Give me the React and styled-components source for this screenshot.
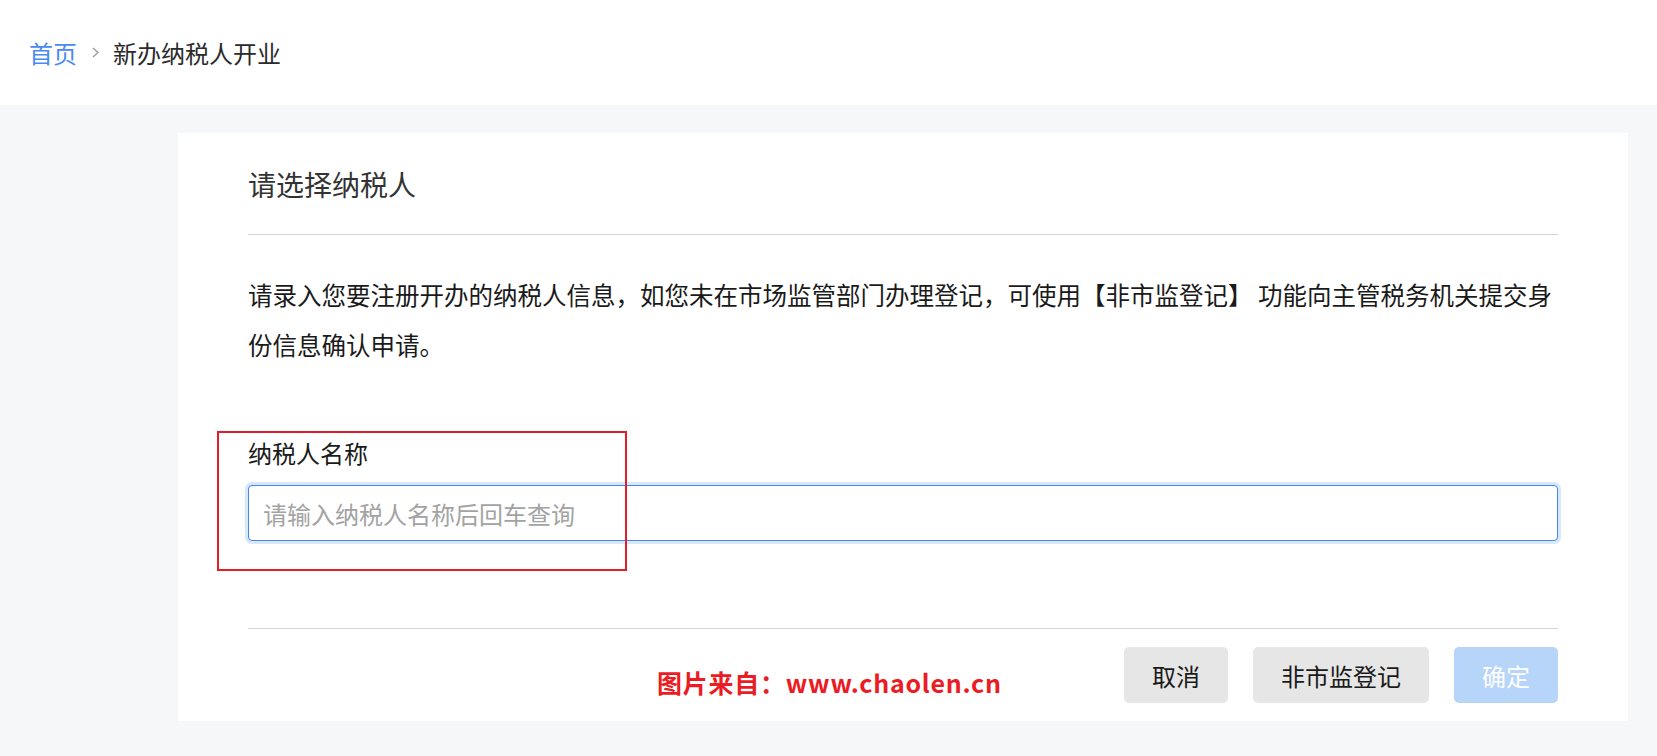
import React from 'react';
import styled, {createGlobalStyle} from 'styled-components';

const GlobalStyle = createGlobalStyle`
  html, body {
    margin: 0;
    padding: 0;
    background: #f6f7f9;
    font-family: "Noto Sans CJK SC", "Noto Sans", sans-serif;
  }
  * { box-sizing: border-box; }
`;

const Page = styled.div`
  position: relative;
  min-height: 756px;
`;

const Header = styled.div`
  height: 105px;
  background: #fff;
  display: flex;
  align-items: center;
  padding-left: 29px;
  font-size: 24px;
`;

const Crumb = styled.span`
  color: ${props => (props.link ? '#4a8af4' : '#2b2b2b')};
  cursor: ${props => (props.link ? 'pointer' : 'default')};
`;

const Sep = styled.span`
  display: inline-flex;
  margin: 0 14px 0 15px;
`;

const Main = styled.div`
  padding: 28px 29px 0 178px;
`;

const Card = styled.div`
  background: #fff;
  padding: 31px 70px 18px;
`;

const Title = styled.div`
  font-size: 28px;
  line-height: 40px;
  color: #333;
  padding-bottom: 30px;
  border-bottom: 1px solid #d6d6d6;
`;

const Notice = styled.p`
  margin: 35px 0 0;
  font-size: 24.5px;
  line-height: 50px;
  color: #1a1a1a;
`;

const Label = styled.div`
  margin-top: 66px;
  font-size: 24px;
  line-height: 34px;
  color: #1a1a1a;
`;

const Input = styled.input`
  display: block;
  width: 100%;
  height: 56px;
  margin-top: 15px;
  padding: 0 14px;
  border: 1px solid #4383f2;
  border-radius: 4px;
  box-shadow: 0 0 0 3px #d7e7fc;
  outline: none;
  font-family: inherit;
  font-size: 24px;
  color: #333;
  &::placeholder { color: #a3a3a3; }
`;

const Footer = styled.div`
  margin-top: 87px;
  padding-top: 18px;
  border-top: 1px solid #d6d6d6;
  display: flex;
  justify-content: flex-end;
  gap: 25px;
`;

const Button = styled.button`
  height: 56px;
  padding: 0 28px;
  border: none;
  border-radius: 5px;
  font-family: inherit;
  font-size: 24px;
  background: ${props => (props.primary ? '#b7d5f9' : '#e6e6e6')};
  color: ${props => (props.primary ? '#fff' : '#1a1a1a')};
  cursor: ${props => (props.primary ? 'not-allowed' : 'pointer')};
`;

const Mark = styled.div`
  position: absolute;
  left: 217px;
  top: 431px;
  width: 410px;
  height: 140px;
  border: 2px solid #e41d27;
  pointer-events: none;
`;

const Watermark = styled.div`
  position: absolute;
  left: 657px;
  top: 664px;
  font-size: 25px;
  line-height: 36px;
  font-weight: 700;
  letter-spacing: 0.75px;
  color: #ec1c24;
  white-space: nowrap;
  pointer-events: none;
`;

export default function App() {
    return (
        <Page>
            <GlobalStyle/>
            <Header>
                <Crumb link>首页</Crumb>
                <Sep>
                    <svg width="7" height="11" viewBox="0 0 7 11">
                        <polyline points="1,1 6,5.5 1,10" fill="none" stroke="#9a9a9a" strokeWidth="1.4"/>
                    </svg>
                </Sep>
                <Crumb>新办纳税人开业</Crumb>
            </Header>
            <Main>
                <Card>
                    <Title>请选择纳税人</Title>
                    <Notice>
                        请录入您要注册开办的纳税人信息，如您未在市场监管部门办理登记，可使用【非市监登记】 功能向主管税务机关提交身份信息确认申请。
                    </Notice>
                    <Label>纳税人名称</Label>
                    <Input placeholder="请输入纳税人名称后回车查询"/>
                    <Footer>
                        <Button>取消</Button>
                        <Button>非市监登记</Button>
                        <Button primary disabled>确定</Button>
                    </Footer>
                </Card>
            </Main>
            <Mark/>
            <Watermark>图片来自：www.chaolen.cn</Watermark>
        </Page>
    );
}
